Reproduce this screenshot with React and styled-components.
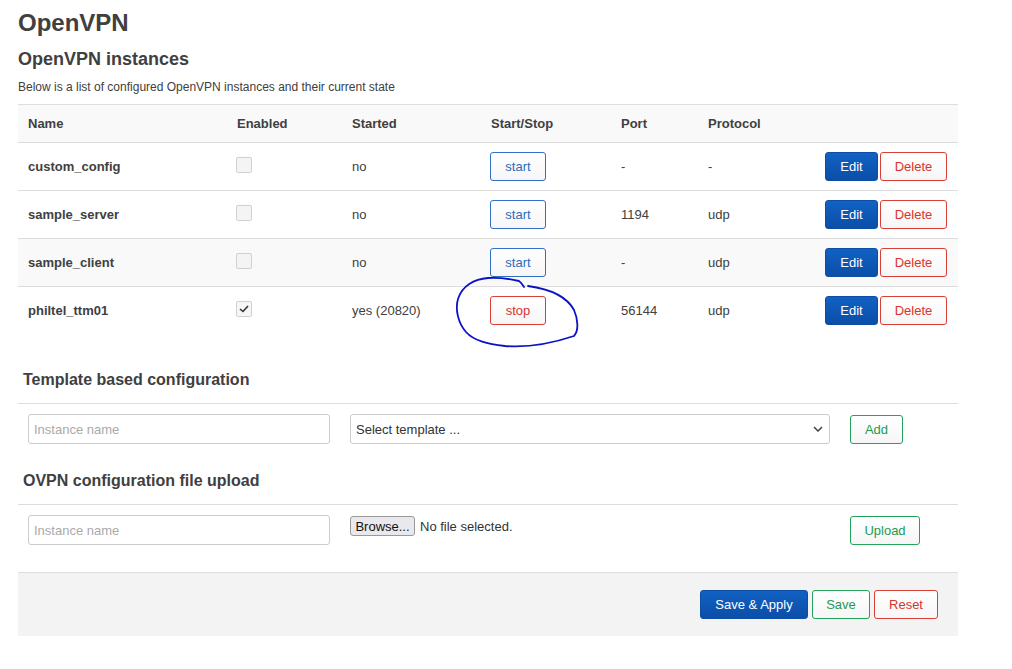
import styled, { createGlobalStyle, css } from 'styled-components';

const GlobalStyle = createGlobalStyle`
    html, body {
        margin: 0;
        padding: 0;
        background: #fff;
        font-family: "Liberation Sans", Arial, sans-serif;
        color: #404040;
    }
`;

const instances = [
    { name: 'custom_config', enabled: false, started: 'no', running: false, port: '-', proto: '-' },
    { name: 'sample_server', enabled: false, started: 'no', running: false, port: '1194', proto: 'udp' },
    { name: 'sample_client', enabled: false, started: 'no', running: false, port: '-', proto: 'udp', shaded: true },
    { name: 'philtel_ttm01', enabled: true, started: 'yes (20820)', running: true, port: '56144', proto: 'udp', circled: true },
];

export default function App() {
    return (
        <>
            <GlobalStyle />
            <Page>
                <Title>OpenVPN</Title>
                <Subtitle>OpenVPN instances</Subtitle>
                <Description>Below is a list of configured OpenVPN instances and their current state</Description>

                <Table>
                    <HeadRow>
                        <HeadCell>Name</HeadCell>
                        <HeadCell>Enabled</HeadCell>
                        <HeadCell>Started</HeadCell>
                        <HeadCell>Start/Stop</HeadCell>
                        <HeadCell>Port</HeadCell>
                        <HeadCell>Protocol</HeadCell>
                        <HeadCell />
                    </HeadRow>
                    {instances.map(inst => (
                        <Row key={inst.name} $shaded={inst.shaded}>
                            <NameCell>{inst.name}</NameCell>
                            <Cell><Check $checked={inst.enabled}>{inst.enabled && <CheckMark />}</Check></Cell>
                            <Cell>{inst.started}</Cell>
                            <Cell $relative>
                                <Button $variant={inst.running ? 'red' : 'blue'} $w={56}>
                                    {inst.running ? 'stop' : 'start'}
                                </Button>
                                {inst.circled && <Scribble />}
                            </Cell>
                            <Cell>{inst.port}</Cell>
                            <Cell>{inst.proto}</Cell>
                            <ActionCell>
                                <Button $variant="primary" $w={53}>Edit</Button>
                                <Button $variant="red" $w={67}>Delete</Button>
                            </ActionCell>
                        </Row>
                    ))}
                </Table>

                <SectionTitle $top={35}>Template based configuration</SectionTitle>
                <FormRow>
                    <TextInput placeholder="Instance name" />
                    <Select>
                        <span>Select template ...</span>
                        <Chevron />
                    </Select>
                    <Button $variant="green" $w={53}>Add</Button>
                </FormRow>

                <SectionTitle $top={18}>OVPN configuration file upload</SectionTitle>
                <FormRow>
                    <TextInput placeholder="Instance name" />
                    <FilePicker>
                        <BrowseButton>Browse...</BrowseButton>
                        <span>No file selected.</span>
                    </FilePicker>
                    <Button $variant="green" $w={70}>Upload</Button>
                </FormRow>

                <Footer>
                    <Button $variant="primary" $w={108}>Save &amp; Apply</Button>
                    <Button $variant="green" $w={58}>Save</Button>
                    <Button $variant="red" $w={64}>Reset</Button>
                </Footer>
            </Page>
        </>
    );
}

function CheckMark() {
    return (
        <svg width="10" height="8" viewBox="0 0 10 8">
            <path d="M1 4 L4 6.5 L9 1" fill="none" stroke="#333" strokeWidth="1.6" />
        </svg>
    );
}

function Chevron() {
    return (
        <svg width="10" height="6" viewBox="0 0 10 6">
            <path d="M1 1 L5 5 L9 1" fill="none" stroke="#444" strokeWidth="1.5" />
        </svg>
    );
}

// hand-drawn annotation around the stop button, in page coordinates
function Scribble() {
    return (
        <ScribbleSvg width="140" height="85" viewBox="450 270 140 85">
            <path
                d="M524 286 C 522 283, 521 281, 519 280 C 510 278, 500 276, 488 277 C 474 278, 462 285, 458 298 C 455 308, 458 322, 466 331 C 474 340, 488 343, 505 345 C 530 347, 556 341, 574 335 C 579 330, 578 318, 574 309 C 567 296, 550 288, 528 285"
                fill="none"
                stroke="#0b12c4"
                strokeWidth="1.8"
                strokeLinecap="round"
            />
        </ScribbleSvg>
    );
}

const Page = styled.div`
    width: 940px;
    padding: 0 0 30px 18px;
`;

const Title = styled.h1`
    margin: 0;
    padding-top: 9px;
    font-size: 24px;
    line-height: 28px;
    font-weight: bold;
`;

const Subtitle = styled.h2`
    margin: 11px 0 0;
    font-size: 18px;
    line-height: 22px;
    font-weight: bold;
`;

const Description = styled.div`
    margin-top: 9px;
    font-size: 12px;
    line-height: 16px;
`;

const Table = styled.div`
    margin-top: 9px;
    border-top: 1px solid #ddd;
`;

const gridCols = css`
    display: grid;
    grid-template-columns: 209px 115px 139px 130px 87px 1fr auto;
    align-items: center;
`;

const HeadRow = styled.div`
    ${gridCols};
    height: 37px;
    background: #f9f9f9;
    border-bottom: 1px solid #ddd;
`;

const HeadCell = styled.div`
    padding: 0 10px;
    font-size: 13px;
    font-weight: bold;
    margin-top: -1px;
`;

const Row = styled.div`
    ${gridCols};
    height: 47px;
    background: ${p => (p.$shaded ? '#f9f9f9' : '#fff')};
    border-bottom: 1px solid #ddd;

    &:last-child {
        border-bottom-color: transparent;
    }
`;

const Cell = styled.div`
    padding: 0 10px 0 ${p => (p.$relative ? '9px' : '10px')};
    font-size: 13px;
    position: ${p => (p.$relative ? 'relative' : 'static')};
`;

const NameCell = styled(Cell)`
    font-weight: bold;
`;

const ActionCell = styled.div`
    display: flex;
    justify-content: flex-end;
    gap: 2px;
    padding-right: 11px;
`;

const Check = styled.div`
    width: 14px;
    height: 14px;
    margin-left: -1px;
    margin-top: -3px;
    border: 1px solid #d0d0d0;
    border-radius: 2px;
    background: ${p => (p.$checked ? '#f6f6f6' : '#f4f4f4')};
    display: flex;
    align-items: center;
    justify-content: center;
`;

const variants = {
    blue: css`
        color: #2a6cc0;
        border: 1px solid #2f70c4;
        background: linear-gradient(#fff, #f6f6f6);
    `,
    red: css`
        color: #d8352b;
        border: 1px solid #d84035;
        background: linear-gradient(#fff, #f6f6f6);
    `,
    green: css`
        color: #1e9a55;
        border: 1px solid #24a25c;
        background: linear-gradient(#fff, #f6f6f6);
    `,
    primary: css`
        color: #fff;
        border: 1px solid #0c4ea6;
        background: linear-gradient(#1161c3, #0b4ea8);
    `,
};

const Button = styled.button`
    box-sizing: border-box;
    width: ${p => p.$w}px;
    height: 29px;
    padding: 0;
    border-radius: 3px;
    font-family: "Liberation Sans", Arial, sans-serif;
    font-size: 13px;
    cursor: pointer;
    ${p => variants[p.$variant]};
`;

const ScribbleSvg = styled.svg`
    position: absolute;
    left: -31px;
    top: -25px;
    pointer-events: none;
`;

const SectionTitle = styled.h3`
    margin: ${p => p.$top}px 0 0;
    padding: 0 0 13px 5px;
    font-size: 16px;
    line-height: 20px;
    font-weight: bold;
    border-bottom: 1px solid #ddd;
`;

const FormRow = styled.div`
    display: grid;
    grid-template-columns: 302px 480px auto;
    column-gap: 20px;
    align-items: center;
    padding: 10px 0 9px 10px;
`;

const TextInput = styled.input`
    box-sizing: border-box;
    height: 30px;
    width: 302px;
    border: 1px solid #ccc;
    border-radius: 3px;
    padding: 0 5px;
    font-family: "Liberation Sans", Arial, sans-serif;
    font-size: 13px;
    color: #404040;

    &::placeholder {
        color: #aaa;
    }
`;

const Select = styled.div`
    box-sizing: border-box;
    height: 30px;
    border: 1px solid #ccc;
    border-radius: 3px;
    padding: 0 6px 0 5px;
    display: flex;
    align-items: center;
    justify-content: space-between;
    font-size: 13px;
    color: #333;
`;

const FilePicker = styled.div`
    display: flex;
    align-items: center;
    gap: 5px;
    font-size: 13px;
    color: #333;
    align-self: start;
    margin-top: 1px;
`;

const BrowseButton = styled.button`
    box-sizing: border-box;
    height: 20px;
    width: 65px;
    padding: 0;
    border: 1px solid #999;
    border-radius: 3px;
    background: #e9e9ed;
    font-family: "Liberation Sans", Arial, sans-serif;
    font-size: 13px;
    color: #111;
`;

const Footer = styled.div`
    margin-top: 18px;
    height: 63px;
    background: #f3f3f3;
    border-top: 1px solid #ddd;
    display: flex;
    justify-content: flex-end;
    align-items: center;
    gap: 4px;
    padding-right: 20px;
`;
